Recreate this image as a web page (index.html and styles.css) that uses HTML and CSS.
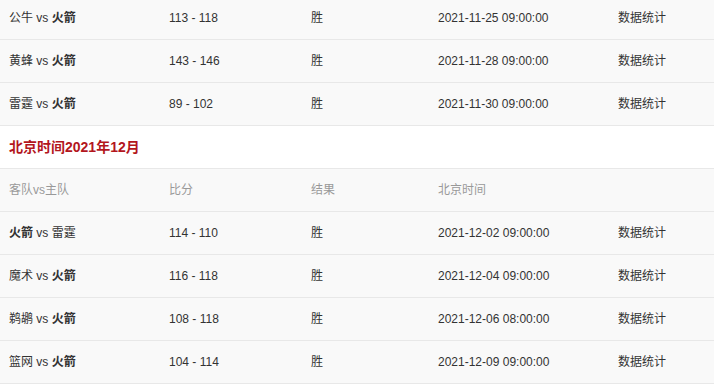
FILE: index.html
```html
<!DOCTYPE html>
<html lang="zh">
<head>
<meta charset="utf-8">
<link rel="stylesheet" href="styles.css">
</head>
<body>
<div class="schedule">
  <div class="row">
    <div class="cell">公牛 vs <b>火箭</b></div>
    <div class="cell">113 - 118</div>
    <div class="cell">胜</div>
    <div class="cell">2021-11-25 09:00:00</div>
    <div class="cell">数据统计</div>
  </div>
  <div class="row">
    <div class="cell">黄蜂 vs <b>火箭</b></div>
    <div class="cell">143 - 146</div>
    <div class="cell">胜</div>
    <div class="cell">2021-11-28 09:00:00</div>
    <div class="cell">数据统计</div>
  </div>
  <div class="row">
    <div class="cell">雷霆 vs <b>火箭</b></div>
    <div class="cell">89 - 102</div>
    <div class="cell">胜</div>
    <div class="cell">2021-11-30 09:00:00</div>
    <div class="cell">数据统计</div>
  </div>
  <div class="month">北京时间2021年12月</div>
  <div class="row head">
    <div class="cell">客队vs主队</div>
    <div class="cell">比分</div>
    <div class="cell">结果</div>
    <div class="cell">北京时间</div>
    <div class="cell"></div>
  </div>
  <div class="row">
    <div class="cell"><b>火箭</b> vs 雷霆</div>
    <div class="cell">114 - 110</div>
    <div class="cell">胜</div>
    <div class="cell">2021-12-02 09:00:00</div>
    <div class="cell">数据统计</div>
  </div>
  <div class="row">
    <div class="cell">魔术 vs <b>火箭</b></div>
    <div class="cell">116 - 118</div>
    <div class="cell">胜</div>
    <div class="cell">2021-12-04 09:00:00</div>
    <div class="cell">数据统计</div>
  </div>
  <div class="row">
    <div class="cell">鹈鹕 vs <b>火箭</b></div>
    <div class="cell">108 - 118</div>
    <div class="cell">胜</div>
    <div class="cell">2021-12-06 08:00:00</div>
    <div class="cell">数据统计</div>
  </div>
  <div class="row">
    <div class="cell">篮网 vs <b>火箭</b></div>
    <div class="cell">104 - 114</div>
    <div class="cell">胜</div>
    <div class="cell">2021-12-09 09:00:00</div>
    <div class="cell">数据统计</div>
  </div>
</div>
</body>
</html>
```
FILE: styles.css
```css
html, body {
  margin: 0;
  padding: 0;
  background: #fff;
}
body {
  font-family: "Liberation Sans", Arial, "Noto Sans CJK SC", sans-serif;
  font-size: 12px;
  color: #333;
  overflow: hidden;
}
.schedule {
  margin-top: -3px;
}
.row {
  display: grid;
  grid-template-columns: 160px 142px 127px 180px 1fr;
  height: 42px;
  line-height: 42px;
  background: #f9f9f9;
  border-bottom: 1px solid #e8e8e8;
}
.cell {
  padding-left: 9px;
  white-space: nowrap;
}
.cell b {
  font-weight: bold;
}
.head {
  color: #999;
}
.month {
  height: 42px;
  line-height: 42px;
  padding-left: 9px;
  background: #fff;
  border-bottom: 1px solid #e8e8e8;
  color: #b3161d;
  font-size: 14px;
  font-weight: bold;
}
```
